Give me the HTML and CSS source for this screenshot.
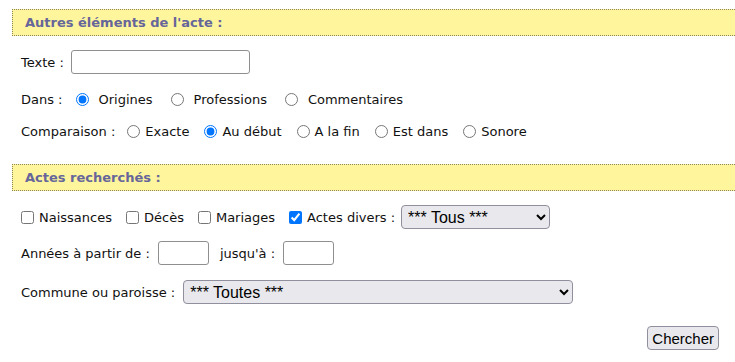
FILE: index.html
```html
<!DOCTYPE html>
<html lang="fr">
<head>
  <meta charset="UTF-8">
  <title>Recherche d'actes</title>
  <link rel="stylesheet" href="styles.css">
</head>
<body>
  <form class="search">
    <!-- Autres éléments -->
    <div class="band">Autres éléments de l'acte :</div>

    <div class="row row-texte">
      <label for="texte">Texte :</label>
      <input type="text" id="texte" class="txt-long">
    </div>

    <div class="row row-dans">
      <span class="lbl">Dans :</span>
      <label class="opt"><input type="radio" name="dans" checked><span>Origines</span></label>
      <label class="opt"><input type="radio" name="dans"><span>Professions</span></label>
      <label class="opt"><input type="radio" name="dans"><span>Commentaires</span></label>
    </div>

    <div class="row row-comp">
      <span class="lbl">Comparaison :</span>
      <label class="opt"><input type="radio" name="comp"><span>Exacte</span></label>
      <label class="opt"><input type="radio" name="comp" checked><span>Au début</span></label>
      <label class="opt"><input type="radio" name="comp"><span>A la fin</span></label>
      <label class="opt"><input type="radio" name="comp"><span>Est dans</span></label>
      <label class="opt"><input type="radio" name="comp"><span>Sonore</span></label>
    </div>

    <!-- Actes recherchés -->
    <div class="band band-actes">Actes recherchés :</div>

    <div class="row row-types">
      <label class="chk"><input type="checkbox"><span>Naissances</span></label>
      <label class="chk"><input type="checkbox"><span>Décès</span></label>
      <label class="chk"><input type="checkbox"><span>Mariages</span></label>
      <label class="chk"><input type="checkbox" checked><span>Actes divers :</span></label>
      <select class="sel-divers">
        <option>*** Tous ***</option>
        <option>Testaments</option>
        <option>Contrats</option>
      </select>
    </div>

    <div class="row row-annees">
      <label for="an1">Années à partir de :</label>
      <input type="text" id="an1" class="txt-an">
      <label for="an2" class="lbl-jusqu">jusqu'à :</label>
      <input type="text" id="an2" class="txt-an">
    </div>

    <div class="row row-commune">
      <label for="commune">Commune ou paroisse :</label>
      <select id="commune" class="sel-commune">
        <option>*** Toutes ***</option>
      </select>
    </div>

    <div class="actions">
      <button type="submit">Chercher</button>
    </div>
  </form>
</body>
</html>
```

FILE: styles.css
```css
* {
  box-sizing: border-box;
}

body {
  margin: 0;
  font-family: Verdana, "DejaVu Sans", sans-serif;
  font-size: 13px;
  color: #111;
  background: #fff;
}

.search {
  padding-top: 9px;
}

/* Bandeaux jaunes */
.band {
  margin-left: 12px;
  height: 27px;
  padding: 0 0 0 12px;
  background-color: #fff59c;
  border: 1px dotted #8c8456;
  border-right: none;
  color: #66669a;
  font-weight: bold;
  font-size: 13px;
  line-height: 25px;
}

.band-actes {
  margin-top: 21px;
}

.row {
  display: flex;
  align-items: center;
  height: 24px;
  padding-left: 21px;
  white-space: nowrap;
}

.row-texte { margin-top: 14px; }
.row-dans { margin-top: 13px; }
.row-comp { margin-top: 8px; }
.row-types { margin-top: 14px; }
.row-annees { margin-top: 12px; }
.row-commune { margin-top: 15px; }

input[type="text"] {
  height: 24px;
  border: 1px solid #8f8f8f;
  border-radius: 3px;
  padding: 1px 3px;
  font-size: 13px;
}

.txt-long {
  width: 179px;
  margin-left: 7px;
}

.txt-an {
  width: 51px;
  margin-left: 8px;
}

.lbl-jusqu {
  margin-left: 11px;
}

/* Boutons radio et cases */
input[type="radio"],
input[type="checkbox"] {
  width: 13px;
  height: 13px;
  margin: 0;
  accent-color: #0075ff;
}

.opt {
  display: flex;
  align-items: center;
}

.row-dans .opt { margin-left: 18px; }
.row-dans .opt:first-of-type { margin-left: 13px; }
.row-dans .opt span { margin-left: 10px; }

.row-comp .opt { margin-left: 15px; }
.row-comp .opt:first-of-type { margin-left: 12px; }
.row-comp .opt span { margin-left: 5px; }

.chk {
  display: flex;
  align-items: center;
  margin-right: 14px;
}

.chk span {
  margin-left: 5px;
}

select {
  height: 24px;
  font-family: Arial, "Liberation Sans", sans-serif;
  font-size: 16px;
  color: #000;
  background-color: #e9e9ed;
  border: 1px solid #8f8f9d;
  border-radius: 4px;
  padding: 0 2px;
}

.sel-divers {
  width: 149px;
  margin-left: -8px;
}

.sel-commune {
  width: 390px;
  margin-left: 8px;
}

.actions {
  display: flex;
  justify-content: flex-end;
  margin-top: 22px;
  padding-right: 16px;
}

button {
  height: 24px;
  padding: 0 4px;
  font-family: Arial, "Liberation Sans", sans-serif;
  font-size: 15px;
  color: #000;
  background-color: #e9e9ed;
  border: 1px solid #8f8f9d;
  border-radius: 4px;
}
```
